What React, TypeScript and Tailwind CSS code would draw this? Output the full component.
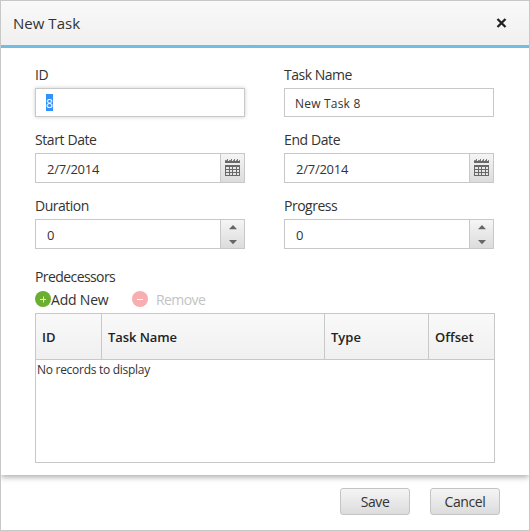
import type { ReactNode } from "react";

function Label({ children, track }: { children: ReactNode; track: string }) {
  return <div className={`h-5 text-[14px] leading-5 whitespace-nowrap ${track}`}>{children}</div>;
}

function CalendarIcon() {
  return (
    <svg width="15" height="17" viewBox="0 0 15 17" shapeRendering="crispEdges">
      <path fill="#8a8a8a" d="M0 1h2v2H0zM4 1h2v2H4zM8 1h1v2H8zM11 1h1v2h-1zM14 1h1v2h-1z" />
      <path fill="#777" d="M2 0h1v2H2zM6 0h1v2H6zM9 0h1v2H9zM12 0h1v2h-1z" />
      <path fill="#686868" d="M0 2h15v2H0z" />
      <path fill="#686868" fillRule="evenodd" d="M0 6h15v11H0zM1 8v2h3V8zM5 8v2h2V8zM8 8v2h3V8zM12 8v2h2V8zM1 11v2h3v-2zM5 11v2h2v-2zM8 11v2h3v-2zM12 11v2h2v-2zM1 14v2h3v-2zM5 14v2h2v-2zM8 14v2h3v-2zM12 14v2h2v-2z" />
    </svg>
  );
}

function DateField({ value }: { value: string }) {
  return (
    <div className="flex h-[30px] w-[210px] border border-[#c8c8c8]">
      <div className="flex-1 pt-[6px] pl-[11px] text-[13px] leading-[18px] tracking-[-0.25px]">{value}</div>
      <div className="flex w-[24px] justify-center border-l border-[#c8c8c8] bg-linear-to-b from-[#f5f5f5] to-[#dcdcdc] pt-[5px]">
        <CalendarIcon />
      </div>
    </div>
  );
}

function SpinField({ value }: { value: string }) {
  return (
    <div className="flex h-[30px] w-[210px] border border-[#c8c8c8]">
      <div className="flex-1 pt-[6px] pl-[11px] text-[13px] leading-[18px]">{value}</div>
      <div className="flex w-[24px] flex-col items-center border-l border-[#c8c8c8] bg-linear-to-b from-[#f5f5f5] to-[#dcdcdc] pt-[5px]">
        <svg width="8" height="20" viewBox="0 0 8 20">
          <path fill="#666" d="M4 0 8 4.2H0zM0 15h8l-4 4.2z" />
        </svg>
      </div>
    </div>
  );
}

export default function App() {
  return (
    <div className="flex h-[531px] w-[530px] flex-col border border-[#c8c8c8] bg-white font-['Open_Sans','Noto_Sans',sans-serif] text-[#333]">
      <header className="flex h-[47px] shrink-0 items-start justify-between border-b-[3px] border-[#6fbee2] bg-linear-to-b from-[#f9f9f9] to-[#f0f0f0] pr-[22px] pl-[12px]">
        <h1 className="pt-[12px] text-[15px] leading-5 tracking-[0.03px]">New Task</h1>
        <svg className="mt-[17px]" width="11" height="10" viewBox="0 0 11 10">
          <path fill="none" stroke="#222" strokeWidth="2.3" d="M1.5 1 9.5 9M9.5 1 1.5 9" />
        </svg>
      </header>
      <main className="h-[427px] shrink-0 bg-white pt-[17px] pl-[34px] shadow-[0_2px_6px_rgba(0,0,0,0.35)] [clip-path:inset(0_0_-10px_0)]">
        <div className="grid grid-cols-[210px_210px] gap-x-[39px]">
          <div className="h-[65px]">
            <Label track="tracking-[-0.3px]">ID</Label>
            <div className="mt-[3px] h-[29px] border border-[#c8c8c8] pt-[5px] pl-[10px] shadow-[0_0_4px_rgba(0,0,0,0.2)]">
              <span className="block h-[17px] w-[7px] bg-[#3390ff] text-[12px] leading-[19px] text-white">8</span>
            </div>
          </div>
          <div className="h-[65px]">
            <Label track="tracking-[-0.5px]">Task Name</Label>
            <div className="mt-[3px] h-[29px] border border-[#c8c8c8] pt-[6px] pl-[10px] text-[12px] leading-[18px] tracking-[0.2px]">New Task 8</div>
          </div>
          <div className="flex h-[66px] flex-col gap-[3px]">
            <Label track="tracking-[-0.4px]">Start Date</Label>
            <DateField value="2/7/2014" />
          </div>
          <div className="flex h-[66px] flex-col gap-[3px]">
            <Label track="tracking-[-0.4px]">End Date</Label>
            <DateField value="2/7/2014" />
          </div>
          <div className="flex h-[71px] flex-col gap-[3px]">
            <Label track="tracking-[-0.5px]">Duration</Label>
            <SpinField value="0" />
          </div>
          <div className="flex h-[71px] flex-col gap-[3px]">
            <Label track="tracking-[-0.5px]">Progress</Label>
            <SpinField value="0" />
          </div>
        </div>
        <Label track="tracking-[-0.58px]">Predecessors</Label>
        <div className="mt-[3px] flex h-[23px] text-[14px] leading-5">
          <div className="flex w-[97px]">
            <svg className="mt-px shrink-0" width="16" height="16" viewBox="0 0 16 16">
              <circle cx="8" cy="8" r="8" fill="#6cae30" />
              <path fill="none" stroke="#e8f3df" d="M5 8.5h6M8.5 5.5v6" />
            </svg>
            <span className="whitespace-nowrap tracking-[-0.2px]">Add New</span>
          </div>
          <svg className="mt-px shrink-0" width="16" height="16" viewBox="0 0 16 16">
            <circle cx="8" cy="8" r="8" fill="#f8adb0" />
            <path fill="none" stroke="#fff" d="M5 8.5h6" />
          </svg>
          <span className="ml-[8px] tracking-[-0.6px] text-[#c3c3c3]">Remove</span>
        </div>
        <div className="h-[150px] w-[460px] border border-[#c8c8c8]">
          <div className="grid h-[46px] grid-cols-[66px_223px_104px_65px] border-b border-[#c8c8c8] bg-linear-to-b from-[#f9f9f9] to-[#f0f0f0] text-[13px] leading-[47px] font-semibold text-[#222]">
            <div className="h-[45px] border-r border-[#c8c8c8] pl-[6px]">ID</div>
            <div className="h-[45px] border-r border-[#c8c8c8] pl-[6px] tracking-[-0.08px]">Task Name</div>
            <div className="h-[45px] border-r border-[#c8c8c8] pl-[6px]">Type</div>
            <div className="h-[45px] pl-[6px]">Offset</div>
          </div>
          <div className="pl-px text-[12px] leading-5 tracking-[-0.28px]">No records to display</div>
        </div>
      </main>
      <footer className="flex flex-1 justify-end gap-[20px] pt-[13px] pr-[29px]">
        <button className="h-[27px] w-[70px] rounded-[3px] border border-[#c4c4c4] bg-linear-to-b from-[#f5f5f5] to-[#dcdcdc] text-[14px] leading-[25px] tracking-[-0.4px]">Save</button>
        <button className="h-[27px] w-[70px] rounded-[3px] border border-[#c4c4c4] bg-linear-to-b from-[#f5f5f5] to-[#dcdcdc] text-[14px] leading-[25px] tracking-[-0.4px]">Cancel</button>
      </footer>
    </div>
  );
}
